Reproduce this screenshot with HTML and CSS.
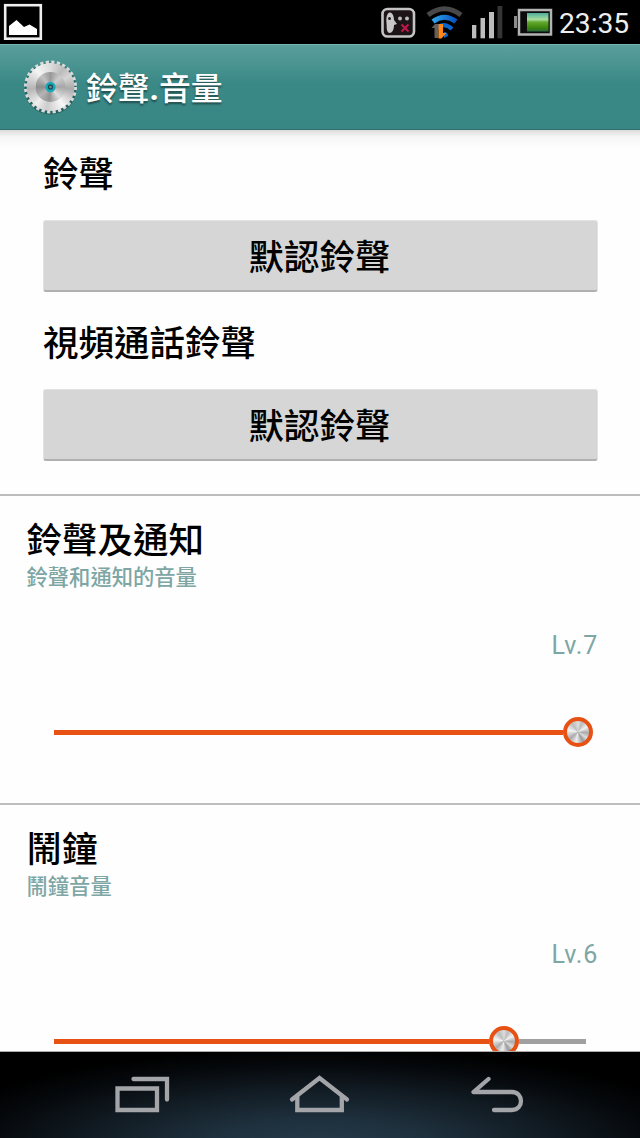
FILE: index.html
```html
<!DOCTYPE html>
<html lang="zh-Hant">
<head>
<meta charset="utf-8">
<title>鈴聲.音量</title>
<link rel="stylesheet" href="styles.css">
</head>
<body>
<div class="screen">
  <div class="status">
    <svg class="status-photo" width="43" height="44" viewBox="0 0 43 44">
      <rect x="5.200" y="5.200" width="35.600" height="33.500" fill="none" stroke="#eee" stroke-width="2.600"/>
      <path d="M9 35V26L16.500 20 24 27 29.500 24.500 37 29V35Z" fill="#fff"/>
    </svg>
    <svg class="status-icons" width="186" height="44" viewBox="370 0 186 44">
      <defs>
        <linearGradient id="wifi" x1="0" x2="1"><stop offset="0" stop-color="#2fa2ea"/><stop offset="1" stop-color="#0753bd"/></linearGradient>
        <linearGradient id="charge" x1="0" y1="0" x2="0" y2="1"><stop offset="0" stop-color="#4fae9d"/><stop offset=".35" stop-color="#a7dc9c"/><stop offset=".5" stop-color="#62a82c"/><stop offset=".8" stop-color="#3c850c"/><stop offset="1" stop-color="#266a3a"/></linearGradient>
      </defs>
      <rect x="382.500" y="9" width="31.500" height="27.500" rx="5" fill="#1c1416" stroke="#c4c4c4" stroke-width="2.600"/>
      <path d="M390 12.500C393 13 394 17 394 20L397 24 394 25C394 30 392 33 389.500 33 386 32 387 27 386.500 23 386 17 387 13 390 12.500Z" fill="#c8c8c8"/>
      <circle cx="389.500" cy="18.500" r="1.500" fill="#222"/>
      <circle cx="400" cy="18.500" r="2" fill="#bbb"/><circle cx="407" cy="18.500" r="2" fill="#bbb"/>
      <path d="M401.500 24.500L408.500 31.500M408.500 24.500L401.500 31.500" stroke="#c4174b" stroke-width="2"/>
      <g fill="none" stroke-width="5">
        <path d="M428 15Q444.500 2.500 461 15" stroke="#484848"/>
        <path d="M433 21.500Q444.500 13 456 21.500" stroke="url(#wifi)"/>
        <path d="M437 27.500Q444.500 22 452 29" stroke="#0965cf" stroke-width="4"/>
      </g>
      <path d="M444 32Q448 32 448 36L444 38Z" fill="#0965cf"/>
      <path d="M431.500 28L435 24H438.500V38H434.500V28Z" fill="#65605b"/>
      <path d="M438.500 24H443V33H446.500L441.500 38.500H438.500Z" fill="#ff8617"/>
      <g fill="#bdbdbd"><rect x="472" y="25" width="4.300" height="13.300"/><rect x="480.500" y="18" width="4.500" height="20.300"/><rect x="489" y="12" width="5" height="26.300"/></g>
      <rect x="497.500" y="6" width="4.800" height="32.300" fill="#343634"/>
      <rect x="514" y="16" width="3" height="12" fill="#8c8c8c"/>
      <rect x="519" y="10" width="32" height="24.500" fill="#0c0c0c" stroke="#b3b3b3" stroke-width="2.500"/>
      <rect x="527" y="13" width="21.500" height="18.500" fill="url(#charge)"/>
    </svg>
    <span class="clock">23:35</span>
  </div>

  <header class="bar">
    <svg class="gear" width="56" height="58" viewBox="-28.500 -29 56 58">
      <circle r="26" cy="1.500" fill="#205553" opacity=".75"/>
      <circle r="24.700" fill="none" stroke="#dadada" stroke-width="3.600" stroke-dasharray="3.200 2.343"/>
      <foreignObject x="-24" y="-24" width="48" height="48"><div class="disc"></div></foreignObject>
      <foreignObject x="-15" y="-15" width="30" height="30"><div class="disc disc-inner"></div></foreignObject>
      <circle r="3.900" fill="#174e55" stroke="#16a9b8" stroke-width="2.500"/>
      <circle r="1.300" fill="#73888a"/>
    </svg>
    <h1 class="bar-title">鈴聲<b>.</b>音量</h1>
  </header>

  <main class="content">
    <section class="tones">
      <h2 class="label">鈴聲</h2>
      <button class="btn">默認鈴聲</button>
      <h2 class="label">視頻通話鈴聲</h2>
      <button class="btn">默認鈴聲</button>
    </section>
    <section class="volume">
      <h2 class="name">鈴聲及通知</h2>
      <p class="desc">鈴聲和通知的音量</p>
      <p class="level">Lv.7</p>
      <div class="slider"><div class="fill full"></div><div class="knob"></div></div>
    </section>
    <section class="volume">
      <h2 class="name">鬧鐘</h2>
      <p class="desc">鬧鐘音量</p>
      <p class="level">Lv.6</p>
      <div class="slider"><div class="fill six"></div><div class="knob"></div><div class="rest"></div></div>
    </section>
  </main>

  <nav class="nav">
    <svg width="640" height="86" viewBox="0 1052 640 86" fill="none" stroke="#a3a5a8" stroke-width="4.300">
      <path d="M117.500 1088.500H157V1110H117.500Z"/>
      <path d="M133.500 1079H167V1099.500" stroke-linecap="round"/>
      <path d="M292 1099.500L319.500 1078 347 1099.500" stroke-linecap="round"/>
      <path d="M297.300 1096V1110H341.800V1096"/>
      <path d="M488.500 1079L473.500 1092H512C524 1092 524 1110 512 1110H494" stroke-linecap="round" stroke-linejoin="round"/>
    </svg>
  </nav>
</div>
</body>
</html>
```

FILE: styles.css
```css
* { box-sizing: border-box; margin: 0; padding: 0; }
body {
  font-family: Roboto, "Noto Sans CJK TC", sans-serif;
  background: #000;
}
.screen {
  width: 640px;
  height: 1138px;
  display: flex;
  flex-direction: column;
  overflow: hidden;
}
.status {
  height: 44px;
  flex: none;
  display: flex;
  align-items: center;
  background: #000;
}
.status-photo { flex: none; }
.status-icons { flex: none; margin-left: 327px; }
.clock {
  margin-left: 3px;
  padding-top: 4px;
  font-size: 28.200px;
  line-height: 40px;
  color: #eee;
  white-space: nowrap;
}
.bar {
  height: 86px;
  flex: none;
  display: flex;
  align-items: center;
  padding-left: 22px;
  background: linear-gradient(#5a9f9c, #3a8987 45%, #398785);
  border-top: 1px solid #77b5b1;
  border-bottom: 1px solid #2f706e;
}
.gear { flex: none; }
.disc {
  width: 100%;
  height: 100%;
  border-radius: 50%;
  background: conic-gradient(#ddd, #bbb 35deg, #d5d5d5 60deg, #aaa 95deg, #f8f8f8 145deg, #ccc 190deg, #eee 220deg, #b5b5b5 265deg, #f4f4f4 320deg, #ddd);
}
.disc-inner {
  background: conic-gradient(#999, #ccc 45deg, #a6a6a6 90deg, #dedede 140deg, #939393 185deg, #b5b5b5 230deg, #8d8d8d 270deg, #c2c2c2 320deg, #999);
}
.bar-title {
  margin-left: 8px;
  padding-top: 3px;
  font-size: 31.800px;
  font-weight: 500;
  line-height: 40px;
  color: #fff;
  text-shadow: 0 2px 2px rgba(0, 0, 0, .45);
}
.bar-title b { font-weight: 800; }
.content {
  flex: 1;
  min-height: 0;
  overflow: hidden;
  background: linear-gradient(#dcdcdc, #f6f6f6 7px, #fefefe 18px);
  border-bottom: 1px solid #aaa;
}
.tones {
  height: 364px;
  padding: 19px 43px 0 42.500px;
}
.label {
  height: 52px;
  margin-bottom: 19px;
  padding-left: .5px;
  font-size: 35.500px;
  line-height: 52px;
  font-weight: 500;
  color: #000;
}
.btn {
  display: block;
  width: 555px;
  height: 72px;
  margin-bottom: 26px;
  padding-top: 5px;
  padding-right: 1px;
  border: 1px solid #e2e2e2;
  border-bottom: 2px solid #b0b0b0;
  border-radius: 3px;
  background: #d6d6d6;
  color: #000;
  font: 500 35.500px/64px Roboto, "Noto Sans CJK TC", sans-serif;
}
.volume {
  height: 309px;
  padding: 19px 42px 0 26.500px;
  border-top: 2px solid #bdbdbd;
}
.name {
  font-size: 35.500px;
  line-height: 52px;
  font-weight: 500;
  color: #000;
}
.desc {
  margin-top: -2px;
  font-size: 21.300px;
  line-height: 26px;
  font-weight: 500;
  color: #7da6a4;
}
.level {
  margin-top: 37px;
  font-size: 25px;
  line-height: 36px;
  letter-spacing: .8px;
  text-align: right;
  color: #7da6a4;
}
.slider {
  display: flex;
  align-items: center;
  height: 30px;
  width: 539px;
  margin: 53px 0 0 27.500px;
}
.fill { height: 5px; background: #e75113; }
.full { width: 509px; }
.six { width: 435px; }
.rest { height: 5px; width: 67px; background: #a0a0a0; }
.knob {
  flex: none;
  width: 30px;
  height: 30px;
  border: 4px solid #e75113;
  border-radius: 50%;
  background: conic-gradient(#ddd, #bbb 25deg, #f2f2f2 60deg, #aaa 95deg, #ddd 125deg, #999 150deg, #eee 190deg, #aaa 230deg, #f4f4f4 280deg, #bbb 325deg, #ddd);
}
.nav {
  height: 86px;
  flex: none;
  background: radial-gradient(ellipse 400px 100px at 50% 112%, #263b4b, #1e303d 30%, #101920 62%, #05080b 85%, #000);
}
.nav svg { display: block; }
```
